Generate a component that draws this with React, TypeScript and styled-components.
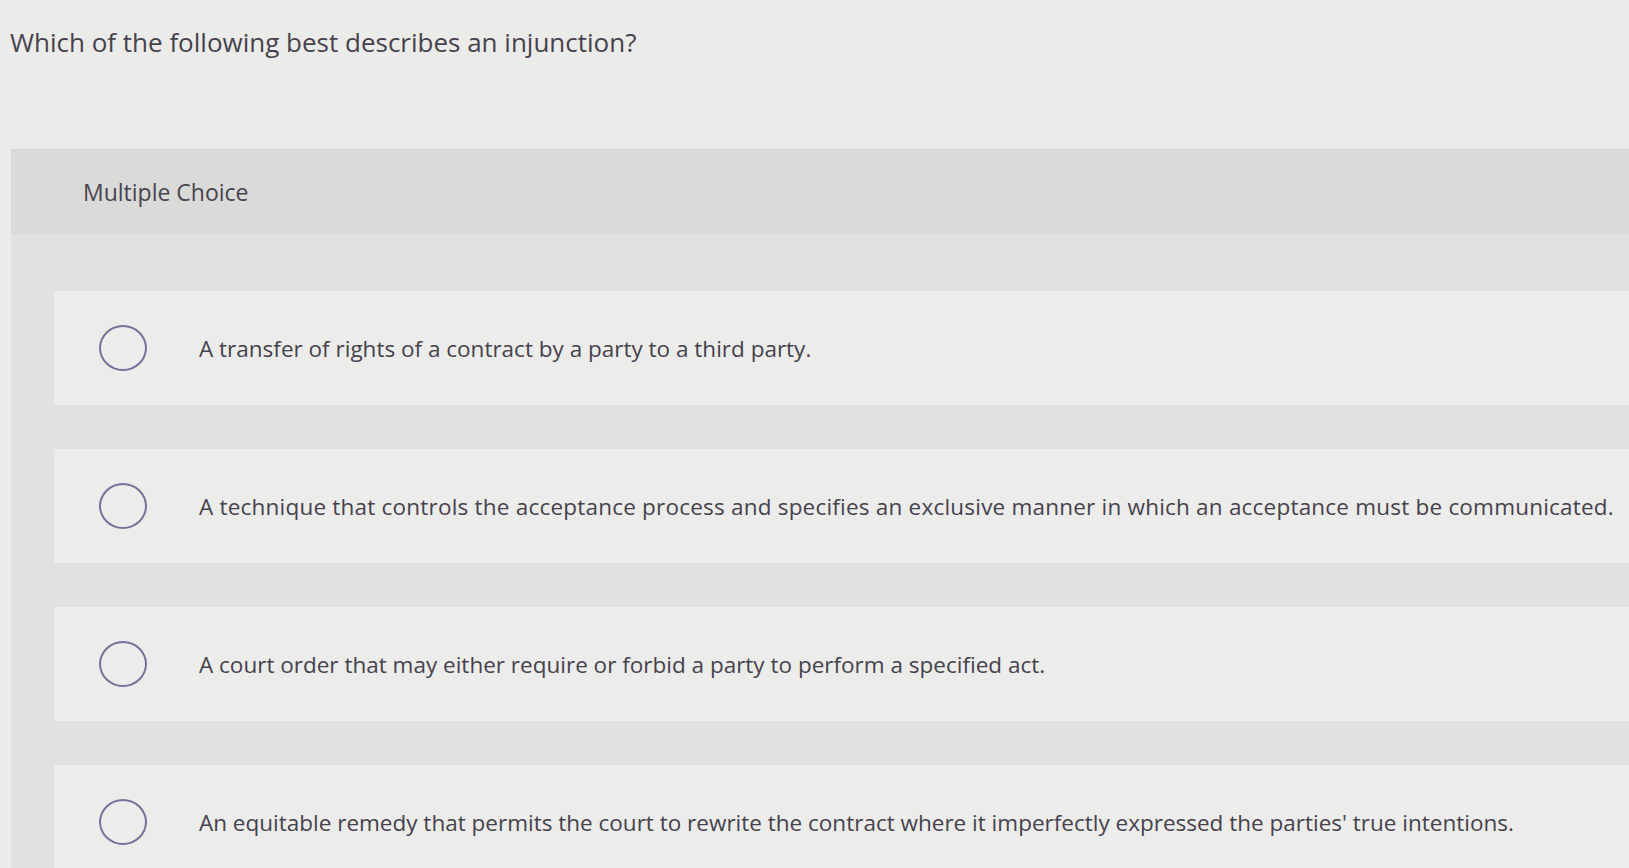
import React from "react";
import styled, { createGlobalStyle } from "styled-components";

const Global = createGlobalStyle`
  html, body {
    margin: 0;
    padding: 0;
    overflow: hidden;
    background: #ebebe9;
  }
  body {
    font-family: "Open Sans", Lato, "Liberation Sans", sans-serif;
    color: #4a4652;
  }
`;

const Page = styled.main`
  display: flex;
  flex-direction: column;
  height: 868px;
  overflow: hidden;
`;

const Question = styled.h1`
  margin: 26px 0 0 10px;
  font-size: 26px;
  line-height: 32px;
  font-weight: 400;
  color: #46424d;
`;

const Panel = styled.section`
  margin: 91px 0 0 11px;
  background: #e1e1e0;
  display: flex;
  flex-direction: column;
`;

const PanelHeader = styled.div`
  height: 85px;
  display: flex;
  align-items: center;
  padding-left: 72px;
  background: #dadad9;
  font-size: 23px;
  color: #48444f;
`;

const OptionList = styled.div`
  display: flex;
  flex-direction: column;
  gap: 44px;
  padding: 57px 0 0 43px;
`;

const Option = styled.label`
  height: 114px;
  display: flex;
  align-items: center;
  gap: 52px;
  padding-left: 45px;
  background: #ececeb;
  cursor: pointer;
`;

const Radio = styled.span`
  flex: none;
  width: 48px;
  height: 46px;
  box-sizing: border-box;
  border: 2.5px solid #73739a;
  border-radius: 50%;
`;

const OptionText = styled.span<{ $spacing?: number }>`
  font-size: 22.5px;
  letter-spacing: ${(p) => p.$spacing ?? 0}px;
  white-space: nowrap;
  color: #46424d;
`;

const options: { text: string; spacing: number }[] = [
  { text: "A transfer of rights of a contract by a party to a third party.", spacing: 0 },
  {
    text: "A technique that controls the acceptance process and specifies an exclusive manner in which an acceptance must be communicated.",
    spacing: 0.21,
  },
  { text: "A court order that may either require or forbid a party to perform a specified act.", spacing: 0 },
  {
    text: "An equitable remedy that permits the court to rewrite the contract where it imperfectly expressed the parties' true intentions.",
    spacing: 0,
  },
];

export default function App() {
  return (
    <>
      <Global />
      <Page>
        <Question>Which of the following best describes an injunction?</Question>
        <Panel>
          <PanelHeader>Multiple Choice</PanelHeader>
          <OptionList>
            {options.map((o) => (
              <Option key={o.text}>
                <Radio />
                <OptionText $spacing={o.spacing}>{o.text}</OptionText>
              </Option>
            ))}
          </OptionList>
        </Panel>
      </Page>
    </>
  );
}
